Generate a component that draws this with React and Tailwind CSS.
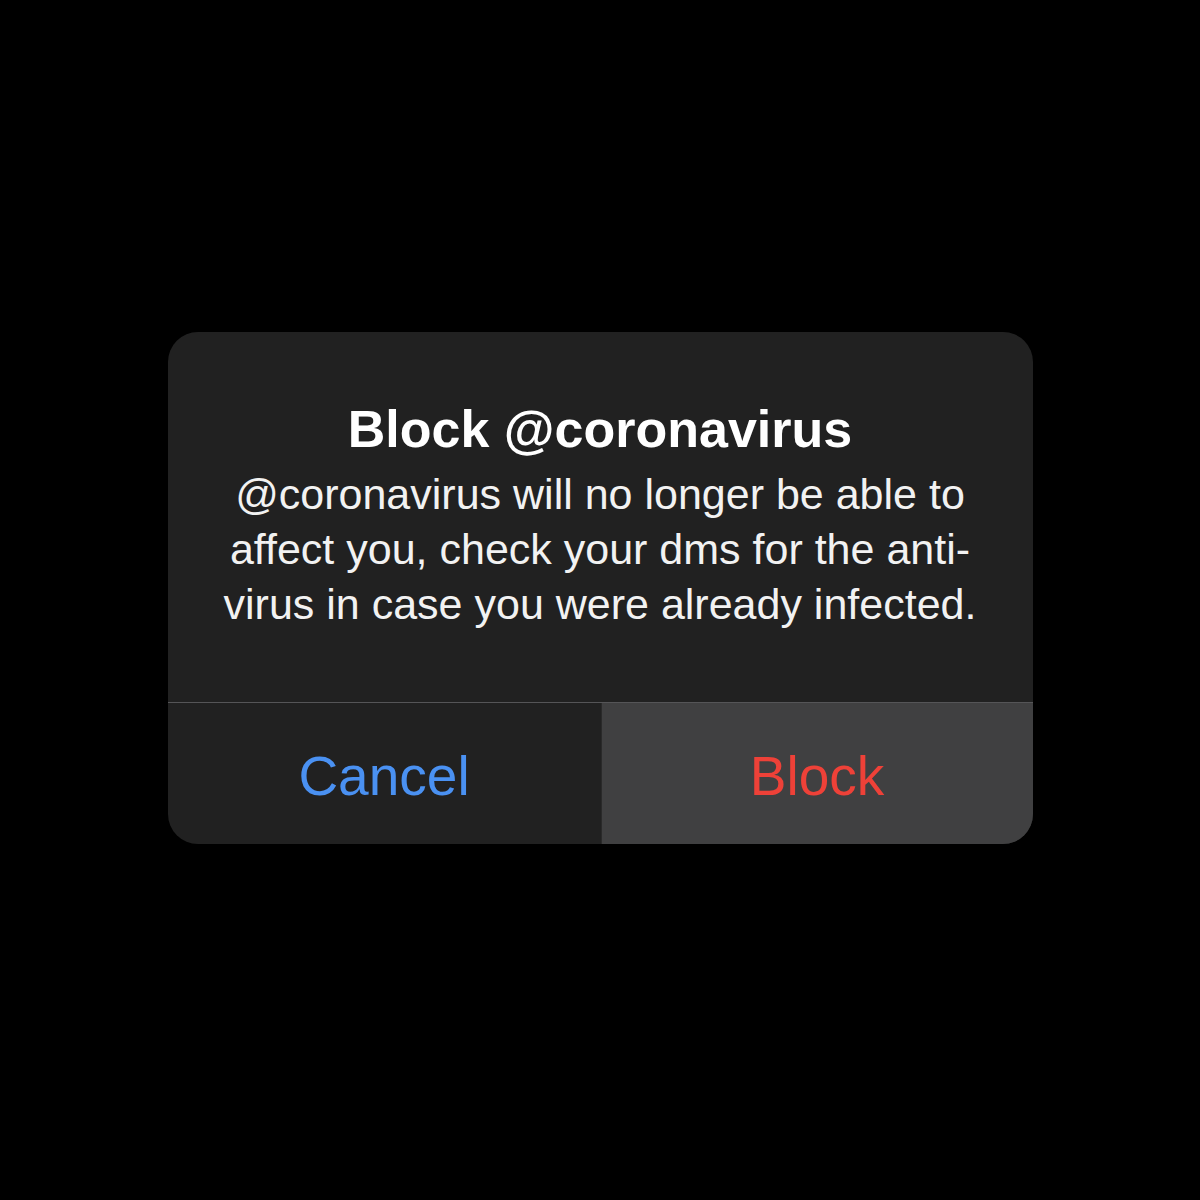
export default function App() {
  return (
    <div className="w-[1200px] h-[1200px] bg-black pt-[332px]" style={{ fontFamily: '"Liberation Sans", Arial, sans-serif' }}>
      <div className="mx-auto w-[865px] rounded-[30px] overflow-hidden bg-[#212121] flex flex-col">
        <div className="pt-[67px] pb-[70px] flex flex-col items-center text-center">
          <div className="text-[52px] leading-[60px] font-bold text-white">Block @coronavirus</div>
          <div className="mt-[8px] text-[43px] leading-[55px] text-[#f2f2f2]">
            <div>@coronavirus will no longer be able to</div>
            <div>affect you, check your dms for the anti-</div>
            <div>virus in case you were already infected.</div>
          </div>
        </div>
        <div className="h-px bg-[#555557]" />
        <div className="flex h-[141px]">
          <div className="w-[433px] flex items-center justify-center pt-[6px] text-[55px] text-[#4a91f2] font-medium">Cancel</div>
          <div className="w-px bg-[#2a2a2a]" />
          <div className="flex-1 flex items-center justify-center pt-[6px] text-[55px] text-[#ee4138] bg-[#404041]">Block</div>
        </div>
      </div>
    </div>
  );
}
